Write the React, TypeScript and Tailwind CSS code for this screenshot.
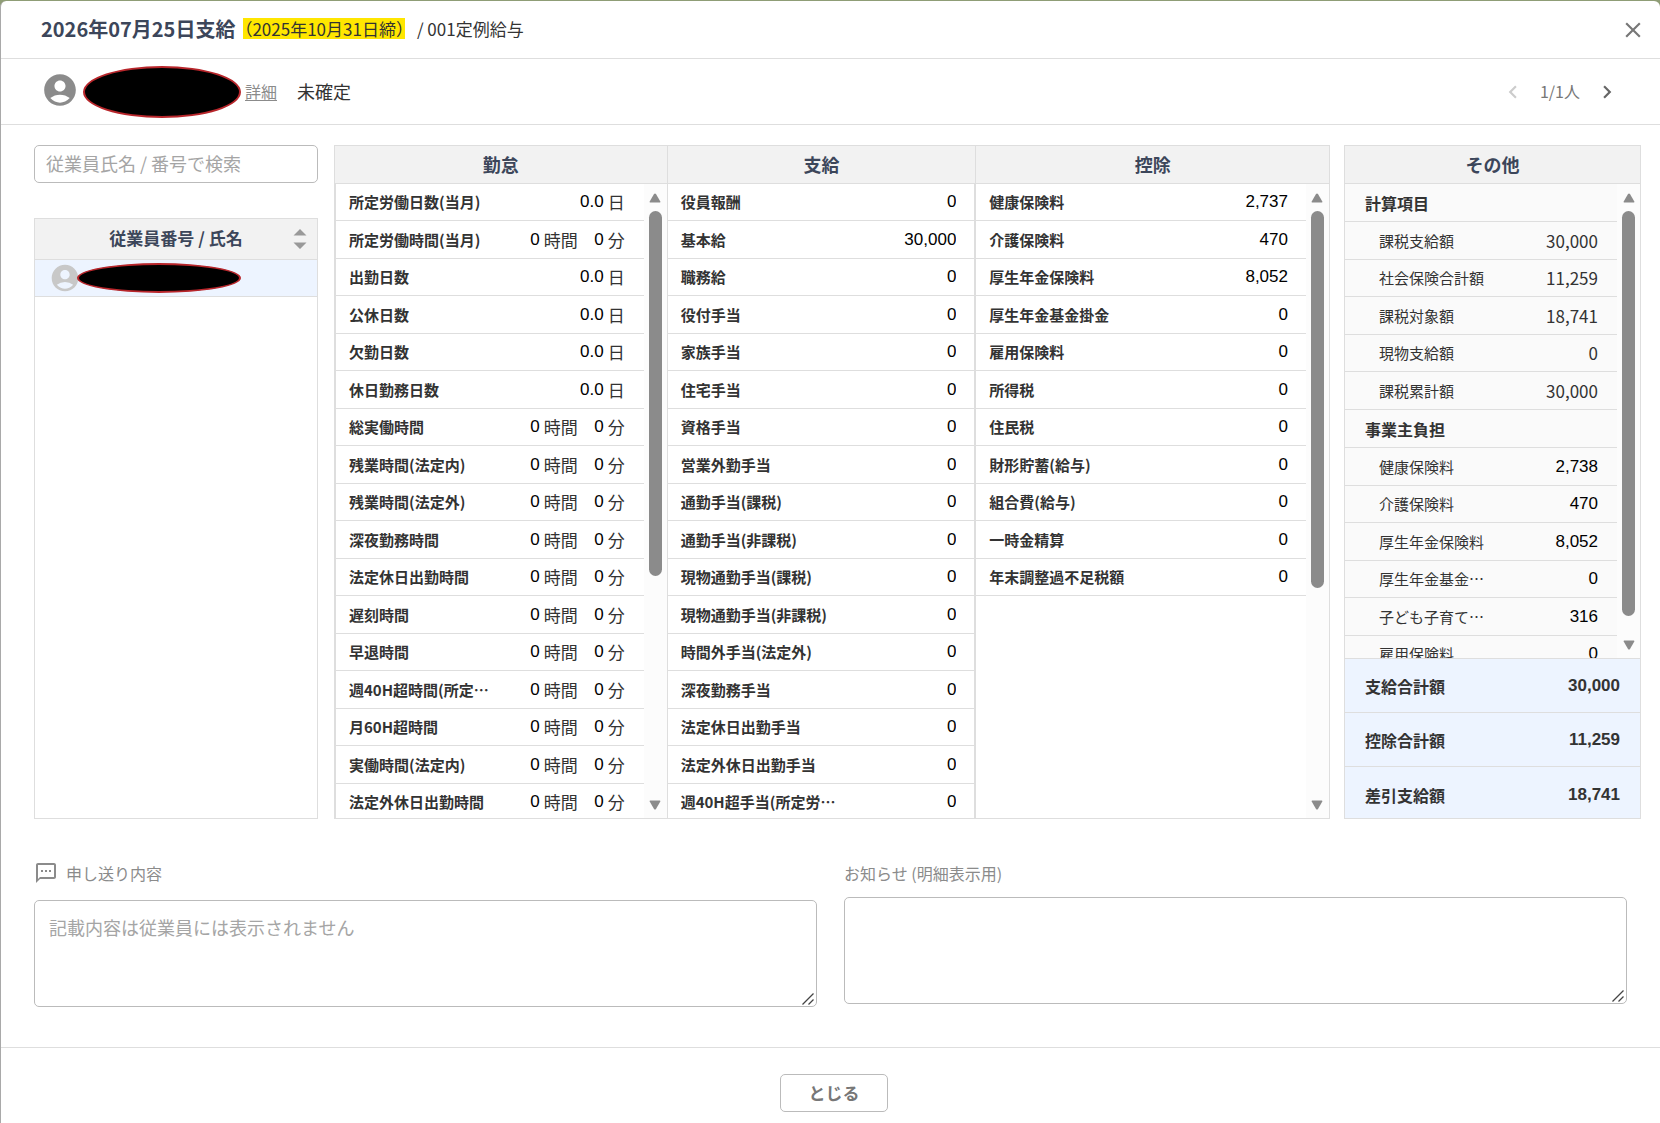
import type { ReactNode, TextareaHTMLAttributes } from "react";
import { MdAccountCircle, MdChevronLeft, MdChevronRight, MdClose, MdOutlineTextsms } from "react-icons/md";

type TimeRow = { label: string; kind: "day" | "time" };
type AmountRow = { label: string; value: string };

const attendance: TimeRow[] = [
  { label: "所定労働日数(当月)", kind: "day" },
  { label: "所定労働時間(当月)", kind: "time" },
  { label: "出勤日数", kind: "day" },
  { label: "公休日数", kind: "day" },
  { label: "欠勤日数", kind: "day" },
  { label: "休日勤務日数", kind: "day" },
  { label: "総実働時間", kind: "time" },
  { label: "残業時間(法定内)", kind: "time" },
  { label: "残業時間(法定外)", kind: "time" },
  { label: "深夜勤務時間", kind: "time" },
  { label: "法定休日出勤時間", kind: "time" },
  { label: "遅刻時間", kind: "time" },
  { label: "早退時間", kind: "time" },
  { label: "週40H超時間(所定…", kind: "time" },
  { label: "月60H超時間", kind: "time" },
  { label: "実働時間(法定内)", kind: "time" },
  { label: "法定外休日出勤時間", kind: "time" },
];

const payments: AmountRow[] = [
  { label: "役員報酬", value: "0" },
  { label: "基本給", value: "30,000" },
  { label: "職務給", value: "0" },
  { label: "役付手当", value: "0" },
  { label: "家族手当", value: "0" },
  { label: "住宅手当", value: "0" },
  { label: "資格手当", value: "0" },
  { label: "営業外勤手当", value: "0" },
  { label: "通勤手当(課税)", value: "0" },
  { label: "通勤手当(非課税)", value: "0" },
  { label: "現物通勤手当(課税)", value: "0" },
  { label: "現物通勤手当(非課税)", value: "0" },
  { label: "時間外手当(法定外)", value: "0" },
  { label: "深夜勤務手当", value: "0" },
  { label: "法定休日出勤手当", value: "0" },
  { label: "法定外休日出勤手当", value: "0" },
  { label: "週40H超手当(所定労…", value: "0" },
];

const deductions: AmountRow[] = [
  { label: "健康保険料", value: "2,737" },
  { label: "介護保険料", value: "470" },
  { label: "厚生年金保険料", value: "8,052" },
  { label: "厚生年金基金掛金", value: "0" },
  { label: "雇用保険料", value: "0" },
  { label: "所得税", value: "0" },
  { label: "住民税", value: "0" },
  { label: "財形貯蓄(給与)", value: "0" },
  { label: "組合費(給与)", value: "0" },
  { label: "一時金精算", value: "0" },
  { label: "年末調整過不足税額", value: "0" },
];

const calculated: AmountRow[] = [
  { label: "課税支給額", value: "30,000" },
  { label: "社会保険合計額", value: "11,259" },
  { label: "課税対象額", value: "18,741" },
  { label: "現物支給額", value: "0" },
  { label: "課税累計額", value: "30,000" },
];

const employer: AmountRow[] = [
  { label: "健康保険料", value: "2,738" },
  { label: "介護保険料", value: "470" },
  { label: "厚生年金保険料", value: "8,052" },
  { label: "厚生年金基金…", value: "0" },
  { label: "子ども子育て…", value: "316" },
  { label: "雇用保険料", value: "0" },
];

const totals: AmountRow[] = [
  { label: "支給合計額", value: "30,000" },
  { label: "控除合計額", value: "11,259" },
  { label: "差引支給額", value: "18,741" },
];

function Triangle({ down = false }: { down?: boolean }) {
  return (
    <svg viewBox="0 0 12 10" className="h-[10px] w-3 shrink-0 fill-[#8b8b8b]" aria-hidden="true">
      {down ? (
        <path d="M1.2 .5h9.6q1 0 .5 1L7 8.900q-1 1.200-2 0L.7 1.500Q.2.500 1.200.500z" />
      ) : (
        <path d="M1.2 9.500h9.600q1 0 .5-1L7 1.100q-1-1.200-2 0L.7 8.500q-.5 1 .5 1z" />
      )}
    </svg>
  );
}

function ScrollTrack({ thumb }: { thumb: string }) {
  return (
    <div className="flex w-[23px] shrink-0 flex-col items-center bg-[#fcfcfc] pt-[9px] pb-2" aria-hidden="true">
      <Triangle />
      <div className={`mt-2 w-[13px] rounded-full bg-[#8b8b8b] ${thumb}`} />
      <div className="mt-auto">
        <Triangle down />
      </div>
    </div>
  );
}

function NumberField({ label, value, width }: { label: string; value: string; width: string }) {
  return (
    <input
      type="text"
      aria-label={label}
      defaultValue={value}
      className={`h-6 bg-transparent text-right font-['Liberation_Sans',sans-serif] text-[17px] text-black outline-none ${width}`}
    />
  );
}

function ColumnHead({ children }: { children: ReactNode }) {
  return (
    <h2 className="flex h-[38px] shrink-0 items-center justify-center border-b border-[#dedede] bg-[#f2f2f2] pb-[2px] text-lg font-bold text-[#3c465a]">
      {children}
    </h2>
  );
}

const rowClass = "odd:h-[37px] even:h-[38px]";
const labelClass = "border-b border-[#dedede] py-0 pl-[13px] text-left text-[15px] font-bold whitespace-nowrap text-[#333]";
const valueClass = "border-b border-[#dedede] py-0";

function AmountTable({ rows }: { rows: AmountRow[] }) {
  return (
    <table className="w-full border-separate border-spacing-0">
      <tbody>
        {rows.map((r) => (
          <tr key={r.label} className={rowClass}>
            <th scope="row" className={labelClass}>{r.label}</th>
            <td className={`${valueClass} pr-[18px]`}>
              <div className="flex justify-end">
                <NumberField label={r.label} value={r.value} width="w-24" />
              </div>
            </td>
          </tr>
        ))}
      </tbody>
    </table>
  );
}

function AttendanceTable() {
  return (
    <table className="w-full border-separate border-spacing-0">
      <tbody>
        {attendance.map((r) => (
          <tr key={r.label} className={rowClass}>
            <th scope="row" className={labelClass}>{r.label}</th>
            <td className={`${valueClass} pr-[19px]`}>
              {r.kind === "day" ? (
                <div className="flex items-center justify-end gap-1 text-[17px]">
                  <NumberField label={r.label} value="0.0" width="w-16" />
                  <span>日</span>
                </div>
              ) : (
                <div className="flex items-center justify-end gap-1 text-[17px]">
                  <NumberField label={`${r.label} 時間`} value="0" width="w-8" />
                  <span>時間</span>
                  <NumberField label={`${r.label} 分`} value="0" width="w-[22px]" />
                  <span>分</span>
                </div>
              )}
            </td>
          </tr>
        ))}
      </tbody>
    </table>
  );
}

function OtherGroup({ title, rows, editable }: { title: string; rows: AmountRow[]; editable: boolean }) {
  return (
    <table className="w-full border-separate border-spacing-0">
      <thead>
        <tr className="h-[38px]">
          <th colSpan={2} scope="colgroup" className="border-b border-[#dedede] py-0 pl-5 text-left text-base font-bold text-[#333]">
            {title}
          </th>
        </tr>
      </thead>
      <tbody>
        {rows.map((r) => (
          <tr key={r.label} className="odd:h-[38px] even:h-[37px]">
            <th scope="row" className="border-b border-[#dedede] py-0 pl-[34px] text-left text-[15px] font-normal whitespace-nowrap text-[#333]">
              {r.label}
            </th>
            <td className="border-b border-[#dedede] py-0 pr-[19px] text-right text-[17px] text-[#333]">
              {editable ? (
                <div className="flex justify-end">
                  <NumberField label={`${title} ${r.label}`} value={r.value} width="w-20" />
                </div>
              ) : (
                r.value
              )}
            </td>
          </tr>
        ))}
      </tbody>
    </table>
  );
}

function Redacted({ size }: { size: string }) {
  return <span className={`shrink-0 rounded-[50%] border-2 border-[#b8262b] bg-black ${size}`} />;
}

function NoteArea(props: TextareaHTMLAttributes<HTMLTextAreaElement>) {
  return (
    <div className="relative">
      <textarea
        {...props}
        className="block h-[107px] w-full resize-none rounded-[5px] border border-[#bbb] px-[14px] py-[14px] text-lg leading-6 outline-none placeholder:text-[#a5a5a5]"
      />
      <svg viewBox="0 0 12 12" className="pointer-events-none absolute right-[3px] bottom-[2px] h-3 w-3 stroke-[#444]" strokeWidth="1.300" aria-hidden="true">
        <path d="M.5 11.500l11-11M6.500 11.500l5-5" />
      </svg>
    </div>
  );
}

export default function App() {
  return (
    <div
      lang="ja"
      className="flex min-h-screen flex-col bg-[#8f9d76] pt-px font-['Noto_Sans_CJK_JP',sans-serif] leading-6 text-[#333]"
    >
      <main className="flex flex-1 flex-col rounded-t-md border-l border-[#a9a9a9] bg-white">
        <header className="flex h-[58px] items-center border-b border-[#dedede] pr-[14px] pl-10">
          <h1 className="pb-[2px] text-xl font-bold text-[#3c465a]">2026年07月25日支給</h1>
          <p className="flex items-center gap-1 pb-[2px] text-[17px]">
            <span className="rounded-[2px] bg-[linear-gradient(#ffe600,#ffe600)] bg-[length:162px_21px] bg-[position:8px_1px] bg-no-repeat">
              （2025年10月31日締）
            </span>
            <span>/ 001定例給与</span>
          </p>
          <button type="button" aria-label="閉じる" className="ml-auto text-[#777]">
            <MdClose size={26} />
          </button>
        </header>

        <section className="flex h-[66px] items-center border-b border-[#dedede] pr-10 pl-10">
          <MdAccountCircle size={38} className="mb-1 shrink-0 text-[#8b8b8b]" />
          <div className="ml-1 flex items-center gap-1">
            <Redacted size="h-[52px] w-[158px]" />
            <a href="#detail" className="pb-[2px] text-base text-[#8b8b8b] underline underline-offset-2">詳細</a>
          </div>
          <span className="ml-5 pb-[2px] text-lg">未確定</span>
          <nav className="ml-auto flex items-center gap-[14px]" aria-label="従業員の切り替え">
            <button type="button" disabled aria-label="前の従業員" className="text-[#ccc]">
              <MdChevronLeft size={26} />
            </button>
            <span className="pb-[2px] text-base text-[#777]">1/1人</span>
            <button type="button" aria-label="次の従業員" className="text-[#666]">
              <MdChevronRight size={26} />
            </button>
          </nav>
        </section>

        <div className="flex pt-5 pr-[19px] pl-[33px]">
          <aside className="mr-4 flex w-[284px] shrink-0 flex-col">
            <input
              type="search"
              aria-label="従業員氏名 / 番号で検索"
              placeholder="従業員氏名 / 番号で検索"
              className="h-[38px] rounded-[5px] border border-[#bbb] px-[11px] pb-[2px] text-lg outline-none placeholder:text-[#a5a5a5]"
            />
            <div className="mt-[35px] flex-1 border border-[#dedede]">
              <table className="w-full border-separate border-spacing-0">
                <thead>
                  <tr>
                    <th className="h-[41px] border-b border-[#dedede] bg-[#f2f2f2] p-0">
                      <button type="button" className="flex w-full items-center pr-[10px] pl-6 text-[17px] font-bold text-[#3c465a]">
                        <span className="flex-1 pb-[2px]">従業員番号 / 氏名</span>
                        <svg viewBox="0 0 14 22" className="h-[22px] w-[14px] fill-[#999]" aria-hidden="true">
                          <path d="M7 1l6.500 6.500H.500zM.500 14.500h13L7 21z" />
                        </svg>
                      </button>
                    </th>
                  </tr>
                </thead>
                <tbody>
                  <tr>
                    <td className="h-[37px] border-b border-[#dedede] bg-[#edf4ff] p-0">
                      <div className="flex items-center pl-[14px]">
                        <MdAccountCircle size={32} className="shrink-0 text-[#c8c8c8]" />
                        <Redacted size="-ml-1 h-[30px] w-[164px]" />
                      </div>
                    </td>
                  </tr>
                </tbody>
              </table>
            </div>
          </aside>

          <div className="grid h-[674px] min-w-0 flex-1 grid-cols-[333fr_309fr_353fr] border border-[#dedede]">
            <section className="flex min-h-0 flex-col border-r border-[#dedede]">
              <ColumnHead>勤怠</ColumnHead>
              <div className="flex min-h-0 flex-1 border-l border-[#dedede]">
                <div className="min-w-0 flex-1 overflow-hidden">
                  <AttendanceTable />
                </div>
                <ScrollTrack thumb="h-[365px]" />
              </div>
            </section>
            <section className="flex min-h-0 flex-col border-r border-[#dedede]">
              <ColumnHead>支給</ColumnHead>
              <div className="min-h-0 flex-1 overflow-hidden border-r border-[#dedede]">
                <AmountTable rows={payments} />
              </div>
            </section>
            <section className="flex min-h-0 flex-col">
              <ColumnHead>控除</ColumnHead>
              <div className="flex min-h-0 flex-1">
                <div className="min-w-0 flex-1">
                  <AmountTable rows={deductions} />
                </div>
                <ScrollTrack thumb="h-[377px]" />
              </div>
            </section>
          </div>

          <section className="ml-[14px] flex h-[674px] w-[297px] shrink-0 flex-col border border-[#dedede]">
            <ColumnHead>その他</ColumnHead>
            <div className="flex min-h-0 flex-1 bg-[#fafafa]">
              <div className="min-w-0 flex-1 overflow-hidden">
                <OtherGroup title="計算項目" rows={calculated} editable={false} />
                <OtherGroup title="事業主負担" rows={employer} editable />
              </div>
              <ScrollTrack thumb="h-[405px]" />
            </div>
            <dl className="shrink-0 bg-[#edf4ff] font-bold text-[#333]">
              {totals.map((t) => (
                <div key={t.label} className="flex h-[54px] items-center justify-between border-t border-[#dedede] px-5 last:h-[52px] last:pt-1">
                  <dt className="text-base">{t.label}</dt>
                  <dd className="font-['Liberation_Sans',sans-serif] text-[17px]">{t.value}</dd>
                </div>
              ))}
            </dl>
          </section>
        </div>

        <div className="mt-[42px] grid grid-cols-2 gap-[27px] pr-[33px] pb-10 pl-[33px]">
          <div className="flex flex-col gap-[15px]">
            <label htmlFor="handover" className="flex items-center gap-2 text-base leading-6 text-[#8b8b8b]">
              <MdOutlineTextsms size={24} />
              申し送り内容
            </label>
            <NoteArea id="handover" placeholder="記載内容は従業員には表示されません" />
          </div>
          <div className="flex flex-col gap-3">
            <label htmlFor="notice" className="text-base leading-6 text-[#8b8b8b]">お知らせ (明細表示用)</label>
            <NoteArea id="notice" />
          </div>
        </div>

        <footer className="flex flex-1 items-start justify-center border-t border-[#dedede] pt-[26px] pb-2 pl-[7px]">
          <button type="button" className="h-[38px] w-[108px] rounded-[5px] border border-[#bbb] text-[17px] font-bold text-[#777]">
            とじる
          </button>
        </footer>
      </main>
    </div>
  );
}
